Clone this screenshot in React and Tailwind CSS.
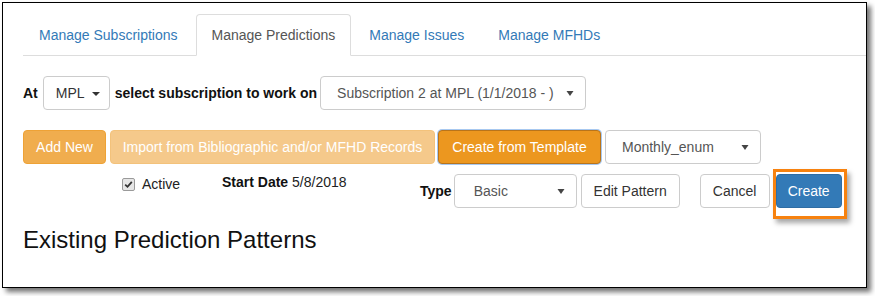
import React from "react";

const Arrow = () => (
  <svg width="8" height="7" viewBox="0 0 8 7" className="shrink-0">
    <path d="M0.5 1 L7.5 1 L4 6 Z" fill="#444" />
  </svg>
);

function Select({ w, text, pl = "pl-[16px]" }) {
  return (
    <div
      className={`flex h-[34px] items-center justify-between rounded-[4px] border border-[#ccc] bg-white ${pl} pr-[11px] text-[#555]`}
      style={{ width: w }}
    >
      <span className="whitespace-nowrap">{text}</span>
      <Arrow />
    </div>
  );
}

export default function App() {
  return (
    <div
      className="h-[296px] w-[875px] overflow-hidden bg-white pl-[2px] pt-[2px] text-[14px] leading-[20px] text-[#333]"
      style={{ fontFamily: '"Liberation Sans", Arial, sans-serif' }}
    >
      <div className="h-[286px] w-[865px] border border-black bg-white pl-[20px] pt-[11px] shadow-[4px_4px_5px_rgba(0,0,0,0.55)]">
        {/* Tabs */}
        <div className="flex border-b border-[#ddd]">
          {["Manage Subscriptions", "Manage Predictions", "Manage Issues", "Manage MFHDs"].map((t, i) => (
            <div
              key={t}
              className={
                i === 1
                  ? "mb-[-1px] mr-[2px] rounded-t-[4px] border border-[#ddd] border-b-white bg-white px-[15px] py-[10px] text-[#555]"
                  : "mb-[-1px] mr-[2px] rounded-t-[4px] border border-transparent px-[15px] py-[10px] text-[#337ab7]"
              }
            >
              {t}
            </div>
          ))}
        </div>

        {/* Row 2 */}
        <div className="mt-[20px] flex h-[34px] items-center">
          <span className="font-bold text-[#111]">At</span>
          <div className="ml-[5px] flex h-[34px] w-[67px] items-center rounded-[4px] border border-[#ccc] bg-white pl-[12px] text-[#333]">
            <span>MPL</span>
            <span className="ml-[7px] mt-[1px] h-0 w-0 border-x-[4px] border-t-[4px] border-x-transparent border-t-[#333]" />
          </div>
          <span className="ml-[5px] font-bold text-[#111]">select subscription to work on</span>
          <div className="ml-[3px]">
            <Select w={266} text="Subscription 2 at MPL (1/1/2018 - )" />
          </div>
        </div>

        {/* Row 3 */}
        <div className="mt-[20px] flex h-[34px] items-center">
          <div className="flex h-[34px] w-[83px] items-center justify-center rounded-[4px] border border-[#eea236] bg-[#f0ad4e] text-white">
            Add New
          </div>
          <div className="ml-[4px] flex h-[34px] w-[325px] items-center justify-center rounded-[4px] border border-[#eea236] bg-[#f0ad4e] text-white opacity-65">
            Import from Bibliographic and/or MFHD Records
          </div>
          <div className="ml-[3px] flex h-[34px] w-[163px] items-center justify-center rounded-[4px] border border-[#b9741a] bg-[#ec971f] text-white shadow-[0_0_0_1px_#a7c8f0]">
            Create from Template
          </div>
          <div className="ml-[4px]">
            <Select w={156} text="Monthly_enum" />
          </div>
        </div>

        {/* Row 4 */}
        <div className="mt-[10px] flex h-[34px] items-start">
          <div className="flex w-[397px] items-start">
            <div className="ml-[99px] flex w-[100px] items-center">
              <span className="mt-[1px] flex h-[13px] w-[13px] items-center justify-center rounded-[2px] border border-[#9a9a9a] bg-[#e6e6e6]">
                <svg width="9" height="9" viewBox="0 0 9 9">
                  <path d="M1.2 4.6 L3.5 6.8 L7.8 1.8" stroke="#333" strokeWidth="1.8" fill="none" />
                </svg>
              </span>
              <span className="ml-[7px] text-[#222]">Active</span>
            </div>
            <div className="mt-[-2px] text-[#222]">
              <span className="font-bold text-[#111]">Start Date</span> 5/8/2018
            </div>
          </div>
          <div className="flex h-[34px] items-center">
            <span className="font-bold text-[#111]">Type</span>
            <div className="ml-[2px]">
              <Select w={123} text="Basic" pl="pl-[19px]" />
            </div>
            <div className="ml-[4px] flex h-[34px] w-[99px] items-center justify-center rounded-[4px] border border-[#ccc] bg-white text-[#333]">
              Edit Pattern
            </div>
            <div className="ml-[20px] flex h-[34px] w-[70px] items-center justify-center rounded-[4px] border border-[#ccc] bg-white text-[#333]">
              Cancel
            </div>
            <div className="relative ml-[6px]">
              <div className="flex h-[34px] w-[66px] items-center justify-center rounded-[4px] border border-[#2e6da4] bg-[#337ab7] text-white">
                Create
              </div>
              <span className="pointer-events-none absolute bottom-[-11px] left-[-3px] right-[-5px] top-[-5px] border-[3px] border-[#f7820f] shadow-[3px_4px_5px_rgba(0,0,0,0.35)]" />
            </div>
          </div>
        </div>

        {/* Heading */}
        <h3 className="mt-[19px] text-[24px] leading-[26px] text-[#111]">Existing Prediction Patterns</h3>
      </div>
    </div>
  );
}
